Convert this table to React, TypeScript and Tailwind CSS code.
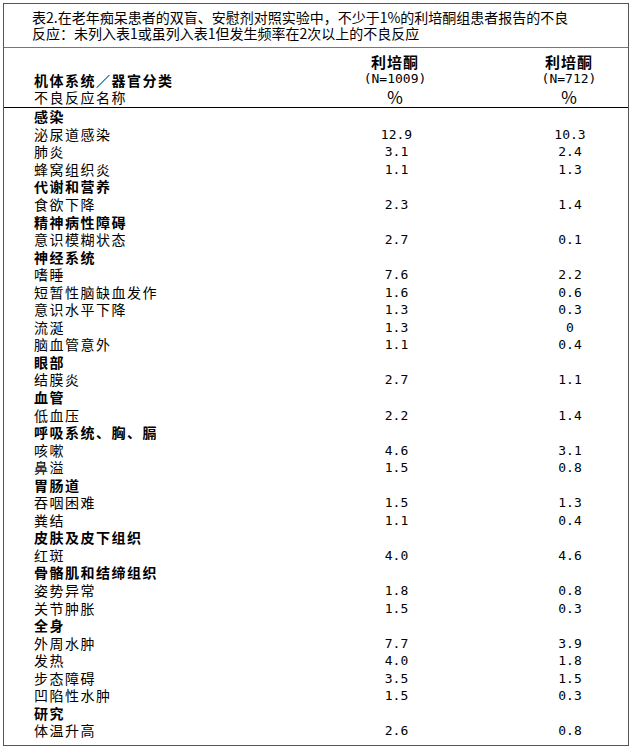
import React from "react";

type Group = { c: string; items: [string, string, string][] };

const data: Group[] = [
  { c: "感染", items: [["泌尿道感染", "12.9", "10.3"], ["肺炎", "3.1", "2.4"], ["蜂窝组织炎", "1.1", "1.3"]] },
  { c: "代谢和营养", items: [["食欲下降", "2.3", "1.4"]] },
  { c: "精神病性障碍", items: [["意识模糊状态", "2.7", "0.1"]] },
  {
    c: "神经系统",
    items: [
      ["嗜睡", "7.6", "2.2"],
      ["短暂性脑缺血发作", "1.6", "0.6"],
      ["意识水平下降", "1.3", "0.3"],
      ["流涎", "1.3", "0"],
      ["脑血管意外", "1.1", "0.4"],
    ],
  },
  { c: "眼部", items: [["结膜炎", "2.7", "1.1"]] },
  { c: "血管", items: [["低血压", "2.2", "1.4"]] },
  { c: "呼吸系统、胸、膈", items: [["咳嗽", "4.6", "3.1"], ["鼻溢", "1.5", "0.8"]] },
  { c: "胃肠道", items: [["吞咽困难", "1.5", "1.3"], ["粪结", "1.1", "0.4"]] },
  { c: "皮肤及皮下组织", items: [["红斑", "4.0", "4.6"]] },
  { c: "骨骼肌和结缔组织", items: [["姿势异常", "1.8", "0.8"], ["关节肿胀", "1.5", "0.3"]] },
  {
    c: "全身",
    items: [
      ["外周水肿", "7.7", "3.9"],
      ["发热", "4.0", "1.8"],
      ["步态障碍", "3.5", "1.5"],
      ["凹陷性水肿", "1.5", "0.3"],
    ],
  },
  { c: "研究", items: [["体温升高", "2.6", "0.8"]] },
];

const cjk = "font-['Noto_Sans_CJK_SC',sans-serif]";
const mono = "font-['DejaVu_Sans_Mono',monospace]";

export default function App() {
  return (
    <div className="bg-white w-[633px] h-[747px] pl-[3px] pt-[3px] text-black">
      <div className="w-[626px] h-[743px] border border-[#555] flex flex-col">
        <div
          className={`${cjk} text-[14px] leading-[16px] pl-[28px] pt-[5px] pb-[6px] border-b border-[#777]`}
        >
          <div>表2.在老年痴呆患者的双盲、安慰剂对照实验中，不少于1%的利培酮组患者报告的不良</div>
          <div>反应：未列入表1或虽列入表1但发生频率在2次以上的不良反应</div>
        </div>
        <div className="grid grid-cols-[276px_230px_118px] h-[60px] items-end border-b border-black pb-[1px]">
          <div className={`${cjk} text-[14px] leading-[17px] tracking-[1.5px] pl-[30px]`}>
            <div className="font-bold">机体系统／器官分类</div>
            <div>不良反应名称</div>
          </div>
          <div className="flex flex-col items-center">
            <div className={`${cjk} font-bold text-[15px] leading-[17px] tracking-[1px]`}>利培酮</div>
            <div className={`${mono} text-[13px] leading-[17px]`}>(N=1009)</div>
            <div className={`${cjk} text-[17px] leading-[19px]`}>％</div>
          </div>
          <div className="flex flex-col items-center">
            <div className={`${cjk} font-bold text-[15px] leading-[17px] tracking-[1px]`}>利培酮</div>
            <div className={`${mono} text-[13px] leading-[17px]`}>(N=712)</div>
            <div className={`${cjk} text-[17px] leading-[19px]`}>％</div>
          </div>
        </div>
        <div className="flex flex-col">
          {data.map((g) => (
            <React.Fragment key={g.c}>
              <div className="grid grid-cols-[276px_230px_118px] h-[17.55px] items-center">
                <div className={`${cjk} font-bold text-[14px] leading-[17px] tracking-[1.5px] pl-[30px]`}>
                  {g.c}
                </div>
              </div>
              {g.items.map(([n, a, b]) => (
                <div key={n} className="grid grid-cols-[276px_230px_118px] h-[17.55px] items-center">
                  <div className={`${cjk} text-[14px] leading-[17px] tracking-[1.5px] pl-[30px]`}>{n}</div>
                  <div className={`${mono} text-[13px] leading-[17px] text-center pl-[3px]`}>{a}</div>
                  <div className={`${mono} text-[13px] leading-[17px] text-center pl-[2px]`}>{b}</div>
                </div>
              ))}
            </React.Fragment>
          ))}
        </div>
      </div>
    </div>
  );
}
